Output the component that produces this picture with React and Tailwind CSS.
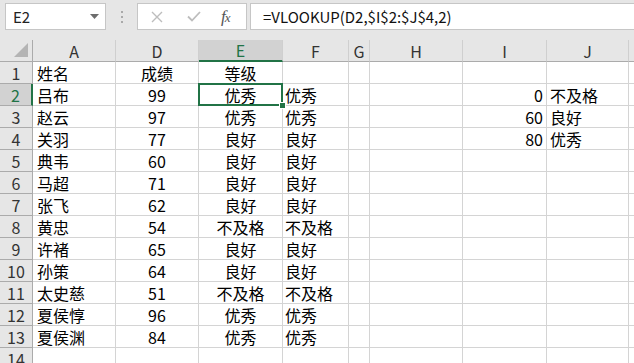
import React from 'react'

const COLS = [
  { key: 'A', w: 'w-[83px]' },
  { key: 'D', w: 'w-[83px]' },
  { key: 'E', w: 'w-[84px]' },
  { key: 'F', w: 'w-[66px]' },
  { key: 'G', w: 'w-[21px]' },
  { key: 'H', w: 'w-[93px]' },
  { key: 'I', w: 'w-[84px]' },
  { key: 'J', w: 'w-[82px]' },
]

const DATA = [
  ['姓名', '成绩', '等级', '', '', '', '', ''],
  ['吕布', '99', '优秀', '优秀', '', '', '0', '不及格'],
  ['赵云', '97', '优秀', '优秀', '', '', '60', '良好'],
  ['关羽', '77', '良好', '良好', '', '', '80', '优秀'],
  ['典韦', '60', '良好', '良好', '', '', '', ''],
  ['马超', '71', '良好', '良好', '', '', '', ''],
  ['张飞', '62', '良好', '良好', '', '', '', ''],
  ['黄忠', '54', '不及格', '不及格', '', '', '', ''],
  ['许褚', '65', '良好', '良好', '', '', '', ''],
  ['孙策', '64', '良好', '良好', '', '', '', ''],
  ['太史慈', '51', '不及格', '不及格', '', '', '', ''],
  ['夏侯惇', '96', '优秀', '优秀', '', '', '', ''],
  ['夏侯渊', '84', '优秀', '优秀', '', '', '', ''],
  ['', '', '', '', '', '', '', ''],
]

const ALIGN = ['justify-start pl-[4px]', 'justify-center', 'justify-center', 'justify-start pl-[2px]', 'justify-start', 'justify-start', 'justify-end pr-[3px]', 'justify-start pl-[3px]']

function Toolbar() {
  return (
    <div className="h-[40px] bg-[#e6e6e6] flex items-start pt-[3px] pl-[5px] gap-0">
      <div className="w-[101px] h-[27px] bg-white border border-[#c6c6c6] flex items-center justify-between pl-[7px] pr-[6px]">
        <span className="text-[15px] text-[#222]">E2</span>
        <svg width="9" height="5" viewBox="0 0 9 5"><path d="M0 0h9L4.5 5z" fill="#6d6d6d" /></svg>
      </div>
      <div className="w-[31px] h-[27px] flex flex-col items-center justify-center gap-[3px]">
        <span className="w-[2px] h-[2px] bg-[#a9a9a9]" />
        <span className="w-[2px] h-[2px] bg-[#a9a9a9]" />
        <span className="w-[2px] h-[2px] bg-[#a9a9a9]" />
      </div>
      <div className="w-[110px] h-[27px] bg-white border border-[#c6c6c6] flex items-center">
        <svg className="ml-[13px]" width="12" height="12" viewBox="0 0 12 12"><path d="M1 1l10 10M11 1L1 11" stroke="#bdbdbd" strokeWidth="1.4" /></svg>
        <svg className="ml-[24px]" width="14" height="11" viewBox="0 0 14 11"><path d="M1 5.5l4 4 8-8.5" stroke="#bdbdbd" strokeWidth="1.8" fill="none" /></svg>
        <span className="ml-[20px] text-[17px] italic text-[#555] font-['Liberation_Serif',serif] tracking-[-1px]">f<span className="text-[13px]">x</span></span>
      </div>
      <div className="ml-[3px] flex-1 h-[27px] bg-white border border-[#c6c6c6] border-r-0 flex items-center pl-[12px]">
        <span className="text-[15px] text-[#111]">=VLOOKUP(D2,$I$2:$J$4,2)</span>
      </div>
    </div>
  )
}

function HeaderRow() {
  return (
    <div className="flex h-[22px] bg-[#e6e6e6]">
      <div className="w-[33px] shrink-0 border-r border-b border-[#ababab] relative">
        <svg className="absolute right-[4px] bottom-[4px]" width="14" height="14" viewBox="0 0 14 14"><path d="M14 0V14H0z" fill="#b4b4b4" /></svg>
      </div>
      {COLS.map(c => (
        <div key={c.key} className={`${c.w} shrink-0 flex items-center justify-center border-r border-[#cfcfcf] ${c.key === 'E' ? 'bg-[#d2d2d2] border-b-2 border-b-[#217346] text-[#217346]' : 'border-b border-b-[#ababab] text-[#333]'}`}>
          {c.key}
        </div>
      ))}
      <div className="flex-1 border-b border-[#ababab]" />
    </div>
  )
}

export default function App() {
  return (
    <div className="w-[634px] h-[363px] overflow-hidden bg-white font-['Noto_Sans_CJK_SC',sans-serif] text-[16px] leading-none">
      <Toolbar />
      <HeaderRow />
      {DATA.map((row, r) => (
        <div key={r} className="flex h-[22px]">
          <div className={`w-[33px] shrink-0 flex items-center justify-center border-b border-[#ababab] ${r === 1 ? 'bg-[#d2d2d2] border-r-2 border-r-[#217346] text-[#217346]' : 'bg-[#e6e6e6] border-r border-r-[#ababab] text-[#333]'}`}>
            {r + 1}
          </div>
          {COLS.map((c, i) => (
            <div key={c.key} className={`${c.w} shrink-0 relative flex items-center border-r border-b border-[#d4d4d4] text-black ${ALIGN[i]}`}>
              {row[i]}
              {r === 1 && c.key === 'E' && (
                <>
                  <div className="absolute left-[-1px] top-[-1px] right-[-1px] bottom-[-1px] border-2 border-[#217346]" />
                  <div className="absolute right-[-4px] bottom-[-4px] w-[7px] h-[7px] bg-[#217346] border border-white z-10" />
                </>
              )}
            </div>
          ))}
          <div className="flex-1 border-b border-[#d4d4d4]" />
        </div>
      ))}
    </div>
  )
}
